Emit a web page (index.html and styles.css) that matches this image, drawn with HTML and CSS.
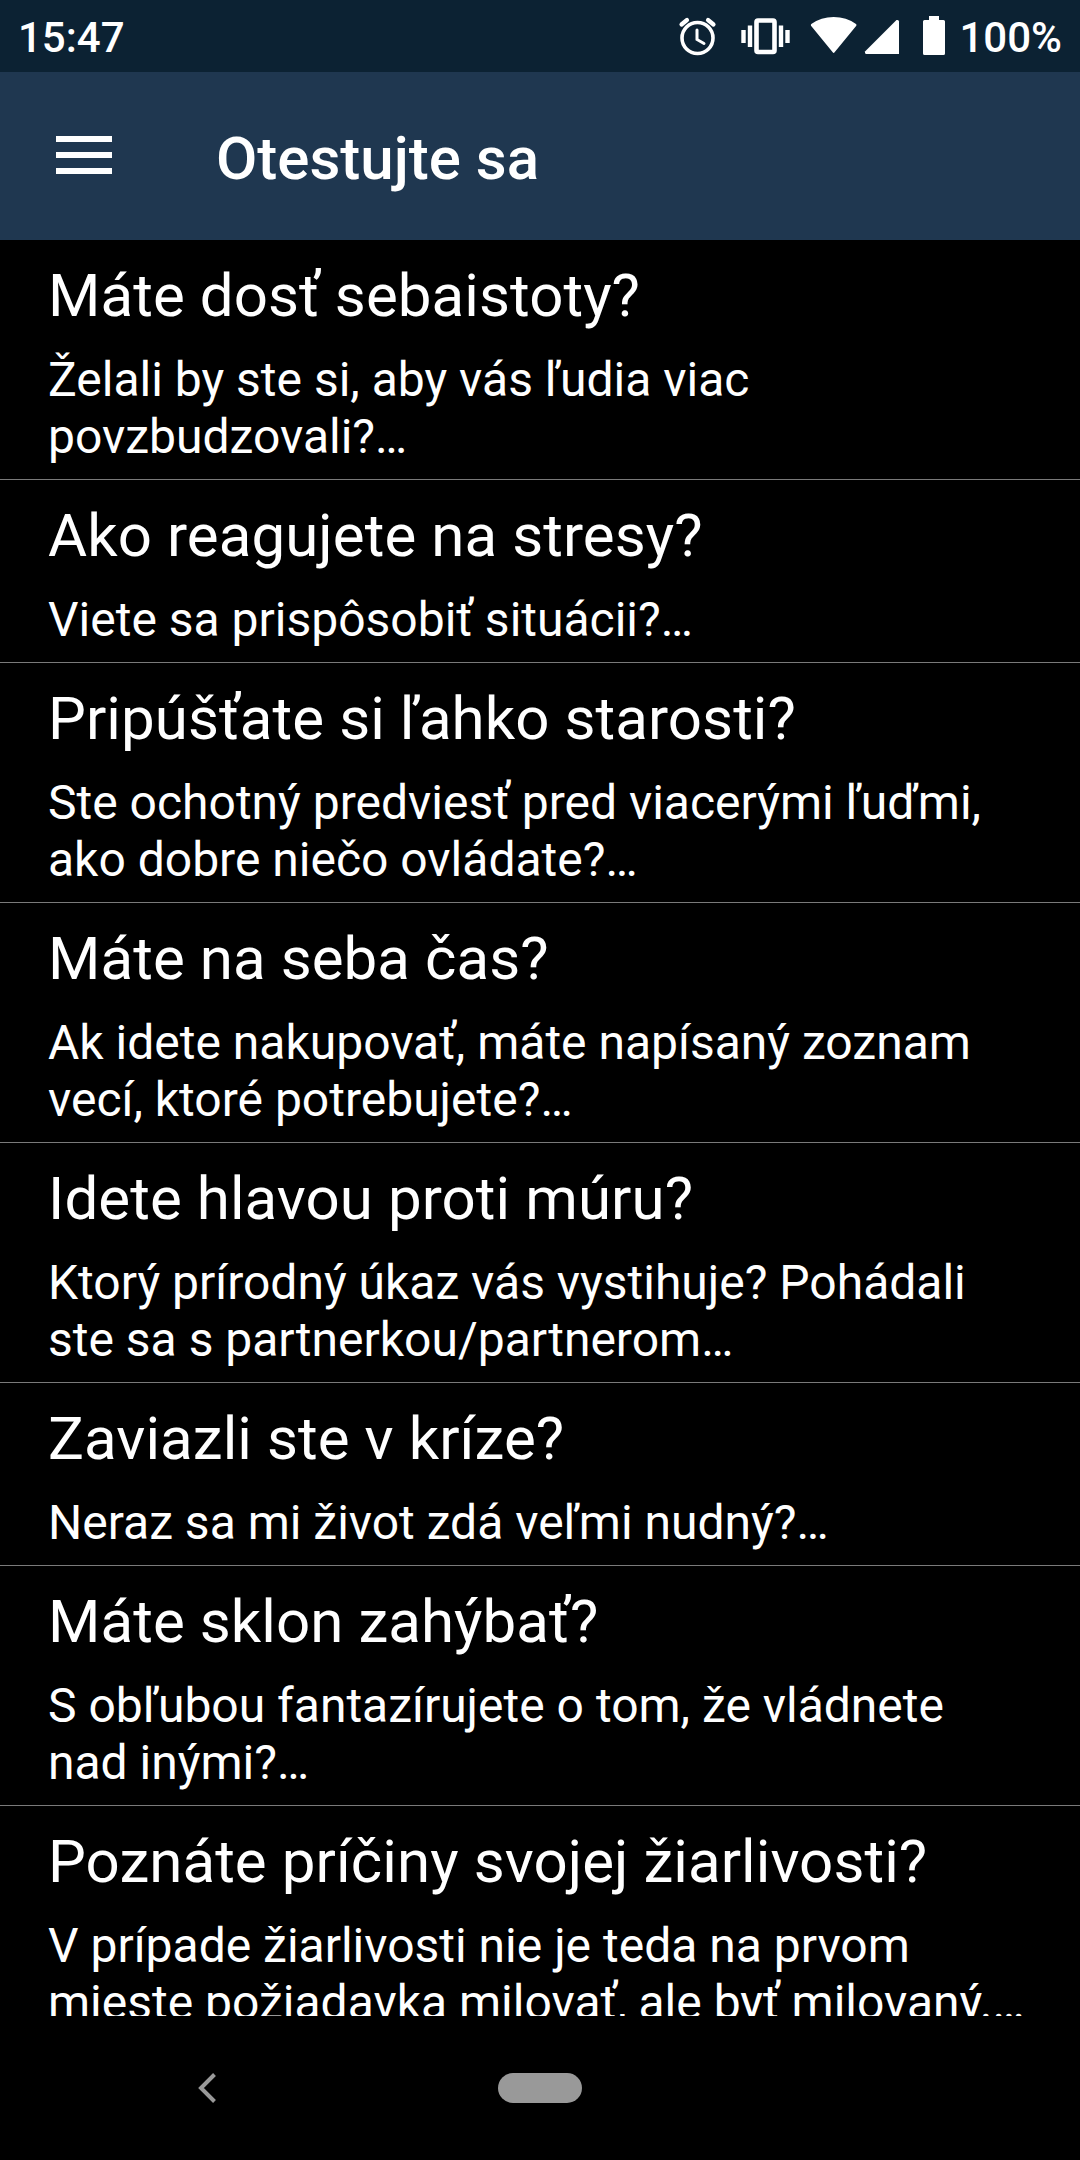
FILE: index.html
```html
<!DOCTYPE html>
<html lang="sk">
<head>
    <meta charset="UTF-8">
    <meta name="viewport" content="width=device-width, initial-scale=1.0">
    <title>Otestujte sa</title>

    <link rel="stylesheet" href="styles.css">
</head>
<body>
    <div class="screen">
        <div class="status-bar">
            <span class="clock">15:47</span>
            <!-- alarm, vibrate, wifi, signal, battery -->
            <svg class="status-icons" width="276" height="72" viewBox="676 0 276 72">
                <g fill="none" stroke="#fff">
                    <circle cx="697.5" cy="38" r="15.5" stroke-width="3.6"/>
                    <path d="M697 30v9.5l7 4" stroke-width="3" stroke-linecap="round"/>
                    <path d="M681.500 24.500l5.500-4.500M713.500 24.500l-5.500-4.500" stroke-width="4.200" stroke-linecap="round"/>
                    <rect x="756.5" y="20.500" width="18" height="31.500" rx="1.500" stroke-width="4.600"/>
                    <path d="M750 25.500v21.500M781 25.500v21.500M743.500 30v13M787.500 30v13" stroke-width="4.400"/>
                </g>
                <g fill="#fff">
                    <path d="M811 25.800Q810.600 24.800 811.300 24Q821 17 833.700 17Q846.500 17 856 24Q856.800 24.800 856.300 25.800L834.600 52.300Q833.600 53.500 832.700 52.300Z"/>
                    <path d="M899 21.500V54H866.500Q865 54 865 52.500V51.500L896.500 20H897.500Q899 20 899 21.500Z"/>
                    <path d="M929 16h10v4h4.500q1.500 0 1.500 1.500v32q0 1.500-1.500 1.500h-19q-1.500 0-1.500-1.500v-32q0-1.500 1.500-1.500h4.500z"/>
                </g>
            </svg>
            <span class="battery">100%</span>
        </div>

        <div class="app-bar">
            <svg class="menu" width="56" height="38" viewBox="0 0 56 38" fill="#fff">
                <rect width="56" height="6"/>
                <rect y="16" width="56" height="6"/>
                <rect y="32" width="56" height="6"/>
            </svg>
            <h1>Otestujte sa</h1>
        </div>

        <div class="list">
            <div class="item">
                <h2>Máte dosť sebaistoty?</h2>
                <p>Želali by ste si, aby vás ľudia viac povzbudzovali?…</p>
            </div>
            <div class="item">
                <h2>Ako reagujete na stresy?</h2>
                <p>Viete sa prispôsobiť situácii?…</p>
            </div>
            <div class="item">
                <h2>Pripúšťate si ľahko starosti?</h2>
                <p>Ste ochotný predviesť pred viacerými ľuďmi, ako dobre niečo ovládate?…</p>
            </div>
            <div class="item">
                <h2>Máte na seba čas?</h2>
                <p>Ak idete nakupovať, máte napísaný zoznam vecí, ktoré potrebujete?…</p>
            </div>
            <div class="item">
                <h2>Idete hlavou proti múru?</h2>
                <p>Ktorý prírodný úkaz vás vystihuje? Pohádali ste sa s partnerkou/partnerom…</p>
            </div>
            <div class="item">
                <h2>Zaviazli ste v kríze?</h2>
                <p>Neraz sa mi život zdá veľmi nudný?…</p>
            </div>
            <div class="item">
                <h2>Máte sklon zahýbať?</h2>
                <p>S obľubou fantazírujete o tom, že vládnete nad inými?…</p>
            </div>
            <div class="item">
                <h2>Poznáte príčiny svojej žiarlivosti?</h2>
                <p>V prípade žiarlivosti nie je teda na prvom mieste požiadavka milovať, ale byť milovaný.…</p>
            </div>
        </div>

        <div class="nav-bar">
            <svg class="back" width="18" height="30" viewBox="0 0 18 30">
                <path d="M16.500 1.500L3 15l13.500 13.500" fill="none" stroke="#999" stroke-width="4"/>
            </svg>
            <div class="home"></div>
        </div>
    </div>
</body>
</html>
```

FILE: styles.css
```css
body {
    margin: 0;
    background-color: #000;
    color: #fff;
    font-family: Roboto, sans-serif;
}

h1, h2, p {
    margin: 0;
}

.screen {
    display: flex;
    flex-direction: column;
    width: 1080px;
    height: 2160px;
    overflow: hidden;
}

.status-bar {
    display: flex;
    align-items: center;
    flex: none;
    height: 72px;
    padding: 0 18px;
    background-color: #0c2233;
    font-size: 42px;
    font-weight: 500;
    box-sizing: border-box;
}

.clock, .battery {
    padding-top: 3px;
}

.status-icons {
    margin-left: auto;
    margin-right: 7px;
}

.app-bar {
    display: flex;
    align-items: center;
    flex: none;
    height: 168px;
    padding-left: 56px;
    background-color: #1f3750;
}

.menu {
    margin-bottom: 2px;
}

.app-bar h1 {
    margin-left: 104px;
    padding-top: 5px;
    font-size: 60px;
    font-weight: 500;
    line-height: 70px;
}

.list {
    height: 1776px;
    overflow: hidden;
}

.item {
    padding: 21px 48px 14px;
    border-bottom: 1px solid #7a7a7a;
}

.item h2 {
    font-size: 60px;
    font-weight: 400;
    line-height: 70px;
    letter-spacing: 0.08px;
    white-space: nowrap;
}

.item p {
    margin-top: 20px;
    font-size: 48px;
    line-height: 57px;
}

.nav-bar {
    display: flex;
    align-items: center;
    flex: none;
    height: 144px;
    padding-left: 198px;
}

.home {
    width: 84px;
    height: 30px;
    margin-left: 282px;
    border-radius: 15px;
    background-color: #999;
}
```
